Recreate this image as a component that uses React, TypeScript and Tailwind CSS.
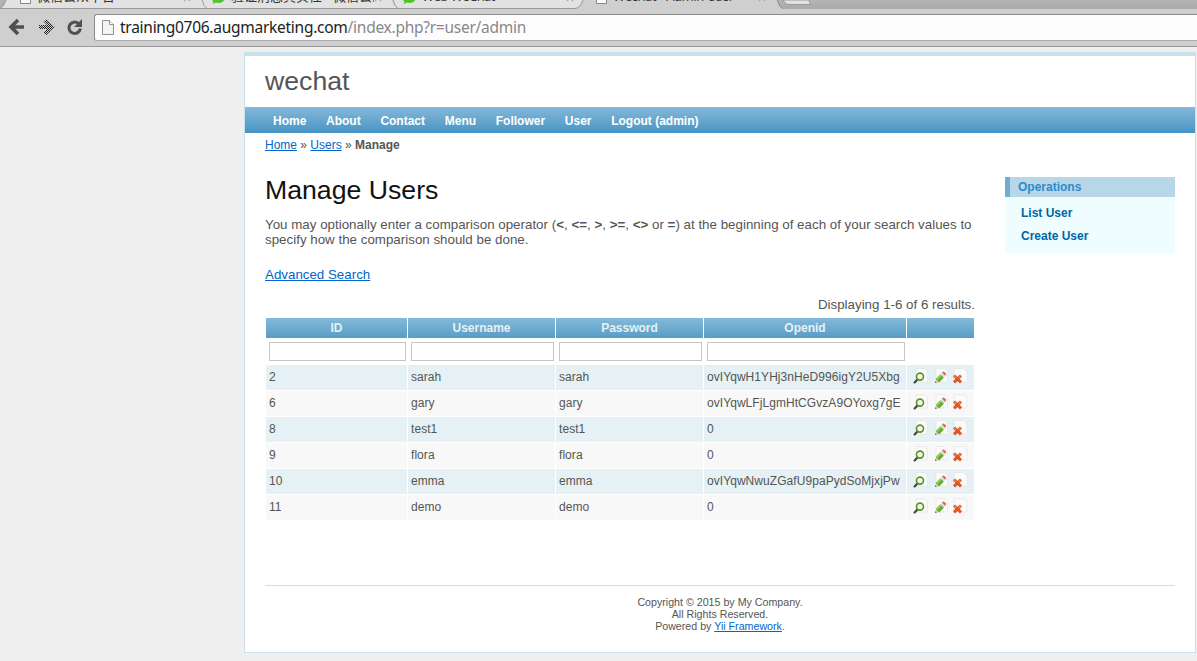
import React from "react";

const nav = ["Home", "About", "Contact", "Menu", "Follower", "User", "Logout (admin)"];

const users = [
  { id: "2", name: "sarah", openid: "ovIYqwH1YHj3nHeD996igY2U5Xbg" },
  { id: "6", name: "gary", openid: "ovIYqwLFjLgmHtCGvzA9OYoxg7gE" },
  { id: "8", name: "test1", openid: "0" },
  { id: "9", name: "flora", openid: "0" },
  { id: "10", name: "emma", openid: "ovIYqwNwuZGafU9paPydSoMjxjPw" },
  { id: "11", name: "demo", openid: "0" },
];

function Sheet() {
  return <path d="M5 .5h7.500l3 3v9.500q0 1-1 1H5q-1 0-1-1V1.500q0-1 1-1z" fill="#fafafa" stroke="#e6e6e6" strokeWidth="0.8" />;
}

function ViewIcon() {
  return (
    <svg width="16" height="16" viewBox="0 0 16 16">
      <Sheet />
      <path d="M5.700 11.200 2.600 14.400" stroke="#454545" strokeWidth="2.200" strokeLinecap="round" />
      <circle cx="8" cy="8.600" r="3.500" fill="#f3f7ee" stroke="#5c9420" strokeWidth="1.600" />
    </svg>
  );
}

function EditIcon() {
  return (
    <svg width="16" height="16" viewBox="0 0 16 16">
      <Sheet />
      <g transform="translate(.9 1.800) scale(.93)">
        <path d="m2.500 13.800 1-4 3.500 3.300z" fill="#e2cf9c" />
        <path d="m2.200 14.300.7-1.900 1.300 1.300z" fill="#444" />
        <path d="m3.100 9.800 5-5.100 3.700 3.700-5 5.200z" fill="#63ad2d" />
        <path d="m4.400 10.300 4.800-4.900" stroke="#a6d977" strokeWidth="1.200" />
        <path d="m8.100 4.700 1.700-1.800 3.600 3.600-1.600 1.900z" fill="#dcdcd2" />
        <path d="m9.800 2.900 1.200-1q.6-.4 1.200.1l1.900 1.900q.5.600 0 1.200l-.9 1.200z" fill="#c87461" />
      </g>
    </svg>
  );
}

function DeleteIcon() {
  return (
    <svg width="16" height="16" viewBox="0 0 16 16">
      <path d="M3 .5h8.500l3.500 3v9.500q0 1-1 1H3q-1 0-1-1V1.500q0-1 1-1z" fill="#fafafa" stroke="#e6e6e6" strokeWidth="0.8" />
      <path d="m2 7.500 7 6.800M9 7.500l-7 6.800" stroke="#dc5524" strokeWidth="3" />
      <path d="m2 7.500 2.300 2.300M9 7.500 6.700 9.800" stroke="#ee8145" strokeWidth="1.600" />
    </svg>
  );
}

function PageIcon({ small = false }: { small?: boolean }) {
  return small ? (
    <svg className="shrink-0" width="11" height="14" viewBox="0 0 11 14">
      <path d="M.5.500h10v13H.500z" fill="#fafafa" stroke="#888" />
    </svg>
  ) : (
    <svg className="shrink-0" width="12" height="15" viewBox="0 0 12 15">
      <path d="M.5.500h7l4 4v10H.500z" fill="#f4f4f4" stroke="#909090" />
      <path d="M7.500.500v4h4" fill="#fff" stroke="#909090" />
    </svg>
  );
}

function BubbleIcon() {
  return (
    <svg className="shrink-0" width="15" height="14" viewBox="0 0 15 14">
      <path d="M7.500 0C3.500 0 0 3 0 6.500c0 2 .8 3.600 2.300 4.700L1.800 14l3-1.400c.9.300 1.700.4 2.700.4 4 0 7-3 7-6.500S11.500 0 7.500 0z" fill="#52c32b" />
    </svg>
  );
}

function Close() {
  return (
    <svg className="shrink-0" width="8" height="8" viewBox="0 0 8 8">
      <path d="m1 1 6 6M7 1 1 7" stroke="#aaa" strokeWidth="1.200" />
    </svg>
  );
}

function TabStrip() {
  return (
    <div className="relative h-[14px] w-full overflow-hidden bg-[#cfcfcf] font-['Open_Sans','Noto_Sans_CJK_SC',sans-serif] text-[13px] leading-[18px] text-[#333]">
      <svg className="absolute inset-0" width="1197" height="14" viewBox="0 0 1197 14">
        <defs>
          <linearGradient id="strip" x2="0" y2="1">
            <stop stopColor="#b4b4b4" />
            <stop offset="1" stopColor="#aaa" />
          </linearGradient>
        </defs>
        <path d="M0 0h7q-3 8-7 8z" fill="#b4b4b4" />
        <path d="M6 0h196q2 8 7 8.500H0Q4 8 6 0z" fill="#e2e2e2" />
        <path d="M202 0h190q2 8 7 8.500H209Q204 8 202 0zM393 0h190q-3 8-8 8.500H401Q395 8 393 0z" fill="#e2e2e2" />
        <path d="M0 8.500h575q5 0 8-8.500" fill="none" stroke="#999" />
        <path d="M6 0Q4 6 0 8.500M202 0q2 7 5 8.500M393 0q2 7 5 8.500" fill="none" stroke="#999" />
        <path d="M777 0h420v9H783Q780 8 777 0z" fill="url(#strip)" />
        <path d="M777.500 0q2 8 5.500 8.500" fill="none" stroke="#888" />
        <path d="M783 0h26l1.500 4.500H788Q785 4 783 0z" fill="#e2e2e2" stroke="#999" />
      </svg>
      <div className="relative flex h-[5px] items-end">
        <div className="flex w-[211px] items-end pl-5">
          <div className="mb-px"><PageIcon small /></div>
          <span className="ml-[6px] w-[146px] whitespace-nowrap">微信公众平台</span>
          <div className="mb-[3px]"><Close /></div>
        </div>
        <div className="flex w-[191px] items-end">
          <div className="mb-px"><BubbleIcon /></div>
          <span className="ml-[5px] w-[143px] overflow-hidden whitespace-nowrap">验证消息真实性 - 微信公众</span>
          <div className="mb-[3px]"><Close /></div>
        </div>
        <div className="flex w-[194px] items-end">
          <div className="mb-px"><BubbleIcon /></div>
          <span className="ml-[5px] w-[144px] tracking-[-0.500px] whitespace-nowrap">Web WeChat</span>
          <div className="mb-[3px]"><Close /></div>
        </div>
        <div className="flex items-end">
          <div className="mb-px"><PageIcon small /></div>
          <span className="ml-[6px] w-[145px] tracking-[-0.350px] whitespace-nowrap">Wechat - Admin User</span>
          <div className="mb-[3px]"><Close /></div>
        </div>
      </div>
    </div>
  );
}

function Toolbar() {
  return (
    <div className="flex h-[33px] border-b border-[#999] bg-[#cfcfcf]">
      <svg className="shrink-0" width="94" height="32" viewBox="0 14 94 32">
        <defs>
          <pattern id="dots" width="2" height="2" patternUnits="userSpaceOnUse">
            <path d="M0 0h1v1H0zM1 1h1v1H1z" fill="#222" />
          </pattern>
        </defs>
        <path d="M24 27H12M18 20 11 27l7 7" fill="none" stroke="#505050" strokeWidth="3.600" />
        <path d="M39 25h8l-3.500-3.500 3-2.500 8 8-8 8-3-2.500 3.500-3.500h-8z" fill="url(#dots)" />
        <path d="M78.500 23.600A5.700 5.700 0 1 0 80.300 28.500" fill="none" stroke="#505050" strokeWidth="3" />
        <path d="M82 19v8h-8z" fill="#505050" />
      </svg>
      <div className="flex h-[27px] flex-1 items-center rounded-l-[3px] border-y border-l border-[#8b8b8b] border-b-[#aaa] bg-[#fdfdfd] pl-[7px] font-['Noto_Sans',sans-serif] text-[15.500px] leading-5 tracking-[-0.265px] text-[#222]">
        <PageIcon />
        <span className="mb-[2px] ml-[6px] whitespace-nowrap">training0706.augmarketing.com<span className="text-[#888]">/index.php?r=user/admin</span></span>
      </div>
    </div>
  );
}

const head = "bg-linear-to-b from-[#85b9d8] to-[#579dc8] text-center font-bold leading-5 text-[#e5f1f4]";

function UserGrid() {
  return (
    <div className="ml-px grid w-[708px] grid-cols-[141px_147px_147px_202px_67px] gap-x-px text-[12px]">
      <div className={head}>ID</div>
      <div className={head}>Username</div>
      <div className={head}>Password</div>
      <div className={head}>Openid</div>
      <div className={head} />
      {["id", "username", "password", "openid"].map((k) => (
        <div key={k} className="h-[27px] pt-1 pr-px pl-[3px]">
          <input aria-label={k} className="block h-[19px] w-full border border-[#c6c6c6] bg-white px-1 outline-none" />
        </div>
      ))}
      <div />
      {users.map((u, i) => {
        const bg = i % 2 === 0 ? "bg-[#e5f1f4]" : "bg-[#f8f8f8]";
        return (
          <React.Fragment key={u.id}>
            {[u.id, u.name, u.name, u.openid].map((t, j) => (
              <div key={j} className={`mb-px h-[25px] overflow-hidden pl-[3px] leading-6 tracking-[0.060px] whitespace-nowrap ${bg}`}>{t}</div>
            ))}
            <div className={`mb-px flex h-[25px] items-start gap-[4px] pt-[3px] pl-[5px] ${bg}`}>
              <ViewIcon />
              <EditIcon />
              <DeleteIcon />
            </div>
          </React.Fragment>
        );
      })}
    </div>
  );
}

export default function App() {
  return (
    <div className="h-[661px] w-[1197px] overflow-hidden bg-[#efefef] font-['Liberation_Sans',Arial,sans-serif] text-[13.333px] text-[#555]">
      <TabStrip />
      <Toolbar />
      <div className="mt-[5px] ml-[244px] h-[601px] w-[952px] border border-t-4 border-[#c9e0ed] bg-white">
        <header className="h-[51px] pt-[9px] pl-5 text-[26.667px] leading-8">wechat</header>
        <nav className="flex h-[26px] gap-[19.700px] bg-linear-to-b from-[#85b9d8] to-[#4594c5] pl-7 text-[12px] leading-[28px] font-bold text-white">
          {nav.map((n) => <a key={n}>{n}</a>)}
        </nav>
        <div className="pl-5 text-[12px] leading-6">
          <a className="text-[#06c] underline">Home</a> » <a className="text-[#06c] underline">Users</a> » <b>Manage</b>
        </div>
        <div className="flex h-[428px]">
          <main className="w-[730px] pt-[17px] pl-5">
            <h1 className="text-[26.667px] leading-8 text-[#111]">Manage Users</h1>
            <p className="mt-[11px] leading-[15px] tracking-[0.010px]">
              You may optionally enter a comparison operator (<b>&lt;</b>, <b>&lt;=</b>, <b>&gt;</b>, <b>&gt;=</b>, <b>&lt;&gt;</b> or <b>=</b>) at the beginning of each of your search values to specify how the comparison should be done.
            </p>
            <a className="mt-5 block leading-[15px] text-[#06c] underline">Advanced Search</a>
            <div className="mt-[15px] mb-[6px] text-right leading-[15px]">Displaying 1-6 of 6 results.</div>
            <UserGrid />
          </main>
          <aside className="ml-[30px] w-[170px] pt-[20px] text-[12px] font-bold">
            <h2 className="h-5 border-l-[5px] border-[#6faccf] bg-[#b7d6e7] pl-2 leading-5 text-[#298dcd]">Operations</h2>
            <div className="h-14 bg-[#effdff] pt-[5px] pl-4 leading-[23px] text-[#0066a4]">
              <a className="block">List User</a>
              <a className="block">Create User</a>
            </div>
          </aside>
        </div>
        <footer className="mx-5 border-t border-[#c9e0ed] pt-[10px] text-center text-[10.667px] leading-3">
          Copyright © 2015 by My Company.<br />
          All Rights Reserved.<br />
          Powered by <a className="text-[#06c] underline">Yii Framework</a>.
        </footer>
      </div>
    </div>
  );
}
